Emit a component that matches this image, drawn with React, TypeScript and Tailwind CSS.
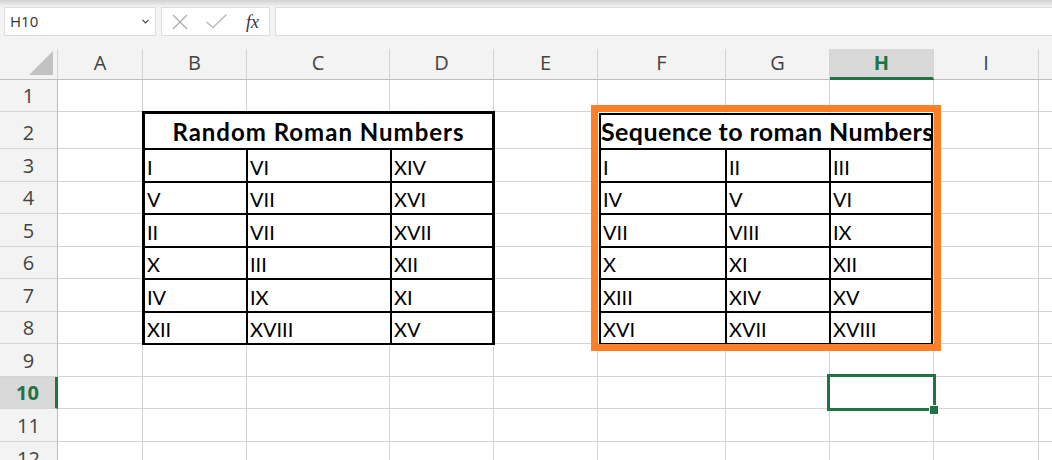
import React from 'react';

const COLS = ['A', 'B', 'C', 'D', 'E', 'F', 'G', 'H', 'I', 'J'];
const ROWS = [1, 2, 3, 4, 5, 6, 7, 8, 9, 10, 11, 12];

// both layers share this template so the tables line up with the sheet
const GRID =
  'grid grid-cols-[58px_85px_104px_143px_104px_104px_128px_104px_104px_105px_105px] grid-rows-[31px_32px_37px_33px_32px_33px_32px_33px_32px_33px_32px_33px_33px] [grid-area:1/1]';

const BODY_H = ['h-[33px]', 'h-[32px]', 'h-[33px]', 'h-[32px]', 'h-[33px]', 'h-[32px]'];

const randomRows = [
  ['I', 'VI', 'XIV'],
  ['V', 'VII', 'XVI'],
  ['II', 'VII', 'XVII'],
  ['X', 'III', 'XII'],
  ['IV', 'IX', 'XI'],
  ['XII', 'XVIII', 'XV'],
];

const sequenceRows = [
  ['I', 'II', 'III'],
  ['IV', 'V', 'VI'],
  ['VII', 'VIII', 'IX'],
  ['X', 'XI', 'XII'],
  ['XIII', 'XIV', 'XV'],
  ['XVI', 'XVII', 'XVIII'],
];

const HEAD_FONT = "font-['Open_Sans',sans-serif]";
const CELL_FONT = "font-['Lato',sans-serif]";

function BodyRow({ cells, h, widths }: { cells: string[]; h: string; widths: string[] }) {
  return (
    <div className={`flex ${h} border-b-2 border-black`}>
      {cells.map((c, i) => (
        <div
          key={i}
          className={`${widths[i]} ${i < 2 ? 'border-r-2 border-black' : ''} flex items-end pl-[2px] pb-[4px] text-[20px] leading-none text-black`}
        >
          {c}
        </div>
      ))}
    </div>
  );
}

function FormulaBar() {
  return (
    <div className="h-[29px] bg-[#f3f3f3] flex">
      <div className="ml-[4px] w-[152px] bg-white border border-[#dedede] flex items-center justify-between pl-[5px] pr-[6px]">
        <span className={`${HEAD_FONT} text-[15px] text-[#333]`}>H10</span>
        <svg width="7" height="5" viewBox="0 0 7 5">
          <polyline points="0.5,0.8 3.5,3.8 6.5,0.8" fill="none" stroke="#444" strokeWidth="1.2" />
        </svg>
      </div>
      <div className="ml-[5px] w-[109px] bg-white border border-[#dedede] flex items-center pl-[10px]">
        <svg width="16" height="16" viewBox="0 0 16 16">
          <path d="M1 1 L15 15 M15 1 L1 15" stroke="#acacac" strokeWidth="1.3" />
        </svg>
        <svg className="ml-[18px]" width="21" height="15" viewBox="0 0 21 15">
          <polyline points="0.5,8 7,13.5 20.5,0.5" fill="none" stroke="#b8b8b8" strokeWidth="1.3" />
        </svg>
        <span className="ml-[19px] font-['Liberation_Serif',serif] italic text-[18px] leading-none text-[#333]">fx</span>
      </div>
      <div className="ml-[5px] flex-1 bg-white border border-r-0 border-[#dedede]" />
    </div>
  );
}

export default function App() {
  return (
    <div className="w-[1052px] h-[460px] overflow-hidden bg-white">
      <div className="h-[7px] bg-linear-to-b from-[#d2d2d2] to-[#f3f3f3]" />
      <FormulaBar />
      <div className="h-[13px] bg-[#f3f3f3]" />

      <div className="grid">
        {/* sheet: headers and gridlines */}
        <div className={GRID}>
          <div className="bg-[#f3f3f3] border-r border-b border-r-[#d4d4d4] border-b-[#bdbdbd] flex items-start justify-end">
            <svg className="mr-[3px] mt-[2px]" width="25" height="25" viewBox="0 0 25 25">
              <polygon points="0,24 24,24 24,0" fill="#c2c2c2" />
            </svg>
          </div>
          {COLS.map((c) =>
            c === 'H' ? (
              <div
                key={c}
                className={`${HEAD_FONT} bg-[#d8d8d8] border-r border-r-[#d4d4d4] border-b-[3px] border-b-[#217346] flex items-end justify-center pb-[4px] text-[20px] leading-none font-bold text-[#217346]`}
              >
                {c}
              </div>
            ) : (
              <div
                key={c}
                className={`${HEAD_FONT} bg-[#f3f3f3] border-r border-b border-r-[#d4d4d4] border-b-[#bdbdbd] flex items-end justify-center pb-[6px] text-[20px] leading-none text-[#444]`}
              >
                {/* J sits past the window edge */}
                {c === 'J' ? null : c}
              </div>
            )
          )}
          {ROWS.map((r) => (
            <React.Fragment key={r}>
              {r === 10 ? (
                <div
                  className={`${HEAD_FONT} bg-[#d8d8d8] border-b border-b-[#d4d4d4] border-r-[3px] border-r-[#217346] flex items-end justify-center pb-[5px] text-[20px] leading-none font-bold text-[#217346]`}
                >
                  {r}
                </div>
              ) : (
                <div
                  className={`${HEAD_FONT} bg-[#f3f3f3] border-b border-r border-b-[#d4d4d4] border-r-[#bdbdbd] flex items-end justify-center pb-[5px] text-[20px] leading-none text-[#444]`}
                >
                  {r}
                </div>
              )}
              {COLS.map((c) => (
                <div key={c} className="border-r border-b border-[#d4d4d4]" />
              ))}
            </React.Fragment>
          ))}
        </div>

        {/* things drawn over the sheet */}
        <div className={`${GRID} pointer-events-none ${CELL_FONT}`}>
          <div className="col-start-3 col-span-3 row-start-3 row-span-7 -m-px flex flex-col bg-white border-x-[3px] border-t-[3px] border-black">
            <div className="h-[36px] border-b-2 border-black flex items-end justify-center pb-[4px] whitespace-nowrap text-[24px] tracking-[1px] leading-none font-bold text-black">
              Random Roman Numbers
            </div>
            {randomRows.map((row, i) => (
              <BodyRow key={i} cells={row} h={BODY_H[i]} widths={['w-[103px]', 'w-[144px]', 'flex-1']} />
            ))}
          </div>

          <div className="col-start-7 col-span-3 row-start-3 row-span-7 mx-px mt-px -mb-px flex flex-col bg-white border-x-2 border-t-2 border-black">
            <div className="h-[35px] border-b-2 border-black flex items-end pb-[4px] whitespace-nowrap text-[25px] tracking-[0.4px] leading-none font-bold text-black">
              Sequence to roman Numbers
            </div>
            {sequenceRows.map((row, i) => (
              <BodyRow key={i} cells={row} h={BODY_H[i]} widths={['w-[126px]', 'w-[104px]', 'flex-1']} />
            ))}
          </div>

          <div className="col-start-7 col-span-3 row-start-3 row-span-7 -m-[7px] border-[7px] border-[#fd7f27]" />

          <div className="relative col-start-9 row-start-11 -ml-[3px] -mt-[3px] -mr-[2px] -mb-[2px] border-[3px] border-[#217346]">
            <div className="absolute -right-[6px] -bottom-[7px] w-[10px] h-[10px] bg-[#217346] border border-white" />
          </div>
        </div>
      </div>
    </div>
  );
}
